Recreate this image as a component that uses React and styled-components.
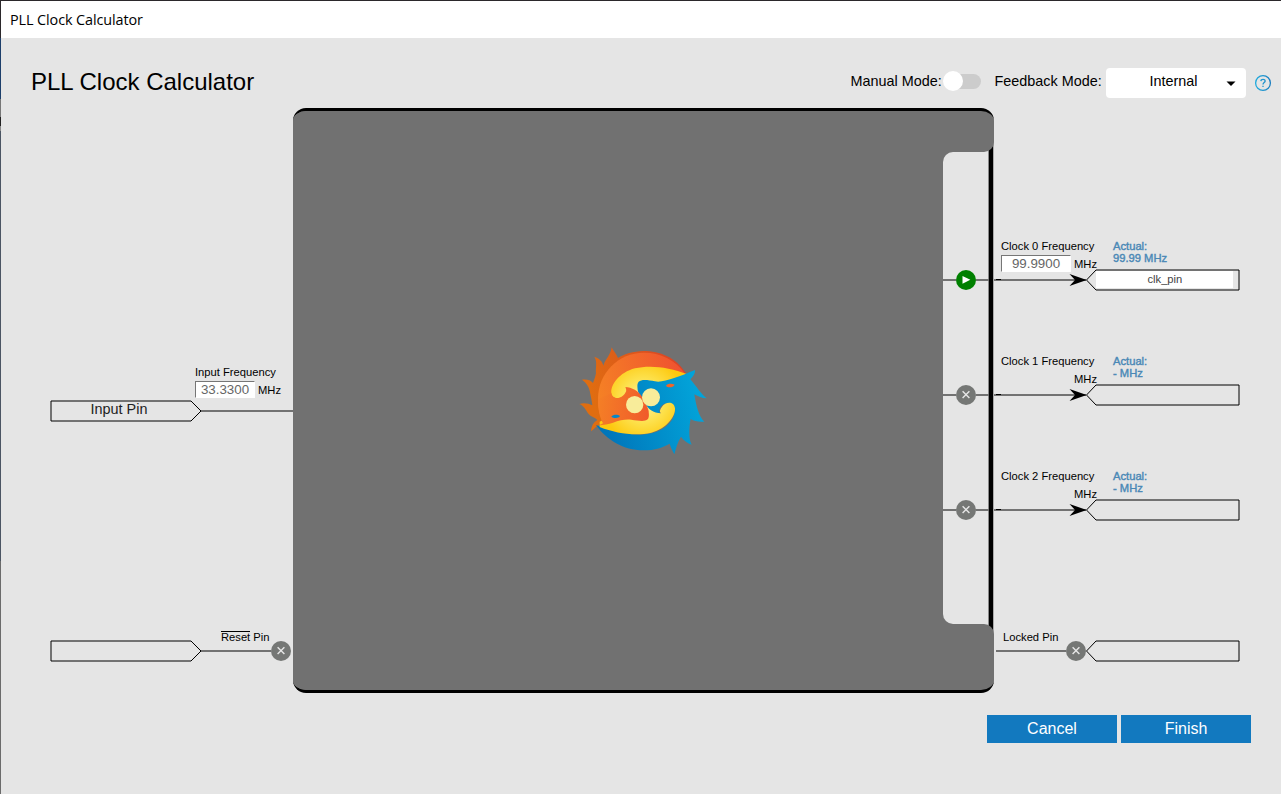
import React from "react";
import styled, { createGlobalStyle } from "styled-components";

const PAPER = "#e5e5e5";
const CHIP = "#717171";
const WIRE = "#727272";

const GlobalStyle = createGlobalStyle`
  * { box-sizing: border-box; }
  body {
    margin: 0;
    background: ${PAPER};
    overflow: hidden;
    font-family: "Liberation Sans", Arial, sans-serif;
    color: #000;
  }
`;

const Window = styled.div`
  display: flex;
  width: 1281px;
  height: 794px;
  border-top: 1px solid #2b282b;
  background: ${PAPER};
`;

const WindowEdge = styled.div`
  width: 1px;
  background: linear-gradient(#2b282b 37px, #1d3f6b 37px 98px, #777 98px 116px, #222 116px 125px, #888 125px 130px, #4b5563 130px 560px, #6b6b6b 560px);
`;

const Content = styled.div`
  flex: 1;
  display: flex;
  flex-direction: column;
`;

const TitleBar = styled.div`
  height: 37px;
  padding: 8px 0 0 9px;
  background: #fff;
  font-family: "Open Sans", "Noto Sans", sans-serif;
  font-size: 14.4px;
  line-height: 21px;
  letter-spacing: -0.09px;
  white-space: nowrap;
`;

const Header = styled.header`
  display: flex;
  height: 70px;
  padding-left: 30px;
`;

const Heading = styled.h1`
  flex: 1;
  margin: 30px 0 0;
  font-size: 24px;
  font-weight: 400;
  line-height: 28px;
`;

const Controls = styled.div`
  display: flex;
  align-items: flex-start;
  padding-right: 9px;
  font-size: 14.4px;
  line-height: 16px;
  white-space: nowrap;
`;

const ControlLabel = styled.label`
  width: ${(p) => p.$width}px;
  padding: 35px 0 0 0.5px;
`;

const Toggle = styled.div`
  display: flex;
  align-items: center;
  width: 38px;
  height: 20px;
  margin: 33px 13px 0 0;
`;

const Knob = styled.div`
  z-index: 1;
  width: 20px;
  height: 20px;
  border-radius: 50%;
  background: #fff;
`;

const Track = styled.div`
  width: 28px;
  height: 15px;
  margin-left: -10px;
  border-radius: 8px;
  background: #ccc;
`;

const Select = styled.div`
  display: flex;
  align-items: center;
  width: 140px;
  height: 30px;
  margin-top: 30px;
  padding-right: 10px;
  border-radius: 4px;
  background: #fff;
`;

const SelectValue = styled.span`
  flex: 1;
  padding: 0 0 5px 15px;
  text-align: center;
`;

const HelpButton = styled.svg`
  display: block;
  margin: 36px 0 0 8px;
`;

const Diagram = styled.main`
  display: flex;
  height: 585px;
`;

const Inputs = styled.section`
  width: 292px;
  padding: 258px 0 0 49px;
`;

const Outputs = styled.section`
  flex: 1;
  padding: 132px 0 0 0;
`;

const Port = styled.div`
  margin-top: ${(p) => p.$gap || 0}px;
`;

const PortInfo = styled.div`
  display: flex;
  height: ${(p) => p.$height}px;
  padding-left: ${(p) => p.$indent}px;
  font-size: 11.2px;
  line-height: 13px;
  white-space: nowrap;
`;

const PortLine = styled.div`
  display: flex;
  align-items: center;
  height: 22px;
  padding-left: ${(p) => p.$indent || 0}px;
`;

const InfoColumn = styled.div`
  width: ${(p) => p.$width}px;
`;

const Overline = styled.span`
  display: inline-block;
  height: 13px;
  border-top: 1px solid #000;
  line-height: 11px;
`;

const Frequency = styled.div`
  display: flex;
  justify-content: ${(p) => (p.$end ? "flex-end" : "flex-start")};
  width: 96px;
  height: 17px;
  margin-top: 2px;
`;

const FrequencyField = styled.div`
  width: ${(p) => p.$width}px;
  height: 17px;
  margin-right: 3px;
  border: 1px solid #fff;
  border-top-color: #767676;
  border-left-color: #767676;
  background: #fff;
  color: #666;
  font-size: 13.33px;
  line-height: 16px;
  text-align: center;
`;

const Unit = styled.span`
  padding-top: 3px;
`;

const Actual = styled.div`
  color: #4a88b6;
  line-height: 12px;
  -webkit-text-stroke: 0.4px #4a88b6;
`;

const Wire = styled.div`
  flex: ${(p) => (p.$length ? "none" : "1")};
  width: ${(p) => (p.$length ? p.$length + "px" : "auto")};
  height: 2px;
  background: ${WIRE};
`;

const Badge = styled.svg`
  display: block;
  flex: none;
`;

const PinBox = styled.div`
  display: grid;
  flex: none;
  width: ${(p) => p.$width}px;
  height: 22px;
  & > * { grid-area: 1 / 1; }
`;

const PinName = styled.span`
  margin-left: 40.6px;
  padding-top: 1px;
  font-size: 14.4px;
  line-height: 16px;
  color: #222;
`;

const PinField = styled.div`
  width: 137px;
  height: 17px;
  margin: 2px 0 0 10.4px;
  background: #fff;
  color: #444;
  font-size: 11.2px;
  line-height: 16px;
  text-align: center;
`;

const Chip = styled.section`
  display: flex;
  flex-direction: column;
  width: 701px;
  border: solid #000;
  border-width: 3px 0;
  border-radius: 13px;
  background: linear-gradient(90deg, ${CHIP} 600px, #000 600px 700px, #aaa 700px);
  overflow: hidden;
`;

const ChipCap = styled.div`
  flex: none;
  z-index: 1;
  height: ${(p) => p.$height}px;
  border-radius: ${(p) => (p.$top ? "0 0 10px 0" : "0 10px 0 0")};
  background: ${CHIP};
`;

const ChipMiddle = styled.div`
  display: flex;
  flex: 1;
  margin: -10px 0;
`;

const ChipFace = styled.div`
  display: flex;
  width: 650px;
  padding: 198px 0 0 277px;
  background: ${CHIP};
`;

const SlotWell = styled.div`
  width: 46px;
  padding: 10px 0;
  background: linear-gradient(90deg, ${CHIP} 30px, ${PAPER} 30px);
  border-right: 1px solid #8a8a8a;
`;

const Slot = styled.div`
  display: flex;
  flex-direction: column;
  gap: 95px;
  height: 472px;
  padding-top: 118px;
  border-radius: 10px 0 0 10px;
  background: ${PAPER};
`;

const SlotRow = styled.div`
  display: flex;
  align-items: center;
  height: 20px;
`;

const Footer = styled.footer`
  display: flex;
  justify-content: flex-end;
  gap: 4px;
  padding: 22px 30px 0 0;
`;

const Button = styled.button`
  width: 130px;
  height: 28px;
  padding: 0 0 1px;
  border: 0;
  background: #1279bf;
  color: #fff;
  font: 16px/27px "Liberation Sans", Arial, sans-serif;
`;

function StatusBadge({ on }) {
  return (
    <Badge width="20" height="20" viewBox="0 0 20 20">
      <circle cx="10" cy="10" r="10" fill={on ? "#008000" : "#757775"} />
      {on ? (
        <path d="M6.5 5.9L14.3 9.7L6.5 13.8Z" fill="#fff" />
      ) : (
        <path d="M6.6 6.2L13.4 13M13.4 6.2L6.6 13" stroke="#e6e6e6" strokeWidth="1.4" />
      )}
    </Badge>
  );
}

function PinOutline({ left }) {
  return (
    <svg width={left ? 152 : 154} height="22" fill="none" stroke="#000">
      <path d={left ? "M1 1H141L151 11L141 21H1Z" : "M153 1H10L0.5 11L10 21H153Z"} />
    </svg>
  );
}

function ArrowWire() {
  return (
    <svg width="92" height="22">
      <path d="M0 11H92" stroke="#000" />
      <path d="M2 10.5H7" stroke="#000" />
      <path d="M75.5 5L93 11L75.5 17L81 11Z" />
    </svg>
  );
}

function ClockPort({ index, value, actual, pin, gap }) {
  return (
    <Port $gap={gap}>
      <PortInfo $height={29} $indent={7}>
        <InfoColumn $width={112}>
          Clock {index} Frequency
          <Frequency $end={!value}>
            {value && <FrequencyField $width={70}>{value}</FrequencyField>}
            <Unit>MHz</Unit>
          </Frequency>
        </InfoColumn>
        <Actual>
          Actual:
          <br />
          {actual} MHz
        </Actual>
      </PortInfo>
      <PortLine>
        <ArrowWire />
        <PinBox $width={154}>
          <PinOutline />
          {pin && <PinField>{pin}</PinField>}
        </PinBox>
      </PortLine>
    </Port>
  );
}

const BLUE_BODY =
  "M375 90C355 97 335 108 310 115C290 122 270 127 255 124C235 120 215 117 206 125C200 132 203 142 203 150C206 165 215 172 222 190C232 210 255 220 271 223C268 215 266 205 275 197C290 183 315 190 315 212C313 240 290 268 245 280C195 292 135 275 78 255C110 300 160 331 220 331C255 331 280 322 299 311C303 325 308 333 313 343C318 325 322 308 333 290C340 300 350 308 365 314C355 296 357 260 362 237C372 244 385 246 403 245C386 230 378 195 373 163C385 170 395 175 410 175C393 162 380 140 361 118C370 108 376 100 375 90Z";
const YELLOW_SWIRL =
  "M350 102C300 82 240 74 195 85C148 97 122 135 124 158C127 180 152 178 163 163C168 155 172 150 166 143C188 145 207 155 215 178L225 181L350 118Z";

function Logo() {
  return (
    <svg width="145" height="125" viewBox="0 0 435 375">
      <defs>
        <linearGradient id="fire" gradientUnits="userSpaceOnUse" x1="84" y1="150" x2="340" y2="80">
          <stop offset="0" stopColor="#f58025" />
          <stop offset="1" stopColor="#ef5130" />
        </linearGradient>
        <linearGradient id="head" gradientUnits="userSpaceOnUse" x1="90" y1="200" x2="240" y2="215">
          <stop offset="0" stopColor="#f47d26" />
          <stop offset="1" stopColor="#f0592b" />
        </linearGradient>
        <linearGradient id="rim" gradientUnits="userSpaceOnUse" x1="60" y1="150" x2="340" y2="80">
          <stop offset="0" stopColor="#e06d10" />
          <stop offset="1" stopColor="#d94327" />
        </linearGradient>
        <linearGradient id="water" gradientUnits="userSpaceOnUse" x1="110" y1="270" x2="390" y2="200">
          <stop offset="0" stopColor="#0076ba" />
          <stop offset="1" stopColor="#02a3d9" />
        </linearGradient>
        <radialGradient id="glow" gradientUnits="userSpaceOnUse" cx="219" cy="181" r="125">
          <stop offset="0" stopColor="#fbf3a8" />
          <stop offset="0.55" stopColor="#fde04a" />
          <stop offset="1" stopColor="#fdc90f" />
        </radialGradient>
      </defs>
      <path
        fill="url(#rim)"
        d="M348 100C318 52 270 33 220 33C190 34 163 42 144 54C140 42 130 34 125 22C122 45 106 58 100 77C98 65 88 55 73 50C83 65 76 84 78 100C76 112 72 120 69 129C62 120 50 117 36 119C52 130 59 145 61 162C63 172 66 185 67 196C55 190 42 187 28 192C44 198 48 212 56 222C62 230 75 232 82 240C70 247 64 258 63 274C70 270 76 262 84 256L200 180Z"
      />
      <path fill="url(#fire)" d="M345 101C315 59 271 38 222 38C145 38 84 99 84 176C84 206 90 231 102 250L220 190Z" />
      <path fill="url(#glow)" d={YELLOW_SWIRL} />
      <path fill="url(#water)" d={BLUE_BODY} />
      <path fill="url(#glow)" d={YELLOW_SWIRL} transform="rotate(180 219.5 181.5)" />
      <path
        fill="url(#head)"
        d="M84 257C102 254 115 252 129 248C149 240 169 237 184 239C204 242 224 246 233 238C239 231 236 220 236 213C233 198 224 191 217 172C207 152 184 142 166 141C171 149 172 156 164 165C151 180 125 176 124 160L84 178C84 206 88 230 99 250Z"
      />
      <circle cx="194" cy="194" r="26" fill="#f8ec9a" />
      <circle cx="243" cy="172" r="27" fill="#f8ec9a" />
      <path d="M288 137C293 130 306 130 314 134C309 143 293 145 288 137Z" fill="#f26529" />
      <path d="M124 230C130 223 143 223 150 228C146 236 130 235 124 230Z" fill="#0787c8" />
    </svg>
  );
}

export default function App() {
  return (
    <Window>
      <GlobalStyle />
      <WindowEdge />
      <Content>
        <TitleBar>PLL Clock Calculator</TitleBar>
        <Header>
          <Heading>PLL Clock Calculator</Heading>
          <Controls>
            <ControlLabel $width={93}>Manual Mode:</ControlLabel>
            <Toggle>
              <Knob />
              <Track />
            </Toggle>
            <ControlLabel $width={112}>Feedback Mode:</ControlLabel>
            <Select>
              <SelectValue>Internal</SelectValue>
              <svg width="10" height="6">
                <path d="M0.5 1.5H9.5L5 6Z" />
              </svg>
            </Select>
            <HelpButton width="18" height="18" viewBox="0 0 18 18" fill="none" stroke="url(#help)" strokeWidth="1.3">
              <defs>
                <linearGradient id="help" gradientUnits="userSpaceOnUse" x1="2" y1="9" x2="16" y2="9">
                  <stop offset="0" stopColor="#22abdd" />
                  <stop offset="1" stopColor="#1c7fc0" />
                </linearGradient>
              </defs>
              <circle cx="9" cy="9" r="7.4" />
              <path d="M6.9 7.1C7 4.7 11.2 4.7 11.1 7.1C11 8.6 9 8.6 9 10.4M9 11.7V13.1" />
            </HelpButton>
          </Controls>
        </Header>
        <Diagram>
          <Inputs>
            <Port>
              <PortInfo $height={34} $indent={145}>
                <InfoColumn $width={96}>
                  Input Frequency
                  <Frequency>
                    <FrequencyField $width={60}>33.3300</FrequencyField>
                    <Unit>MHz</Unit>
                  </Frequency>
                </InfoColumn>
              </PortInfo>
              <PortLine>
                <PinBox $width={151}>
                  <PinOutline left />
                  <PinName>Input Pin</PinName>
                </PinBox>
                <Wire />
              </PortLine>
            </Port>
            <Port $gap={209}>
              <PortInfo $height={9} $indent={171}>
                <span>
                  <Overline>Reset</Overline> Pin
                </span>
              </PortInfo>
              <PortLine>
                <PinBox $width={151}>
                  <PinOutline left />
                </PinBox>
                <Wire $length={70} />
                <StatusBadge />
              </PortLine>
            </Port>
          </Inputs>
          <Chip>
            <ChipCap $top $height={41} />
            <ChipMiddle>
              <ChipFace>
                <Logo />
              </ChipFace>
              <SlotWell>
                <Slot>
                  {[true, false, false].map((on, i) => (
                    <SlotRow key={i}>
                      <Wire $length={13} />
                      <StatusBadge on={on} />
                      <Wire $length={13} />
                    </SlotRow>
                  ))}
                </Slot>
              </SlotWell>
            </ChipMiddle>
            <ChipCap $height={66} />
          </Chip>
          <Outputs>
            <ClockPort index={0} value="99.9900" actual="99.99" pin="clk_pin" />
            <ClockPort index={1} actual="-" gap={64} />
            <ClockPort index={2} actual="-" gap={64} />
            <Port $gap={110}>
              <PortInfo $height={9} $indent={9}>
                Locked Pin
              </PortInfo>
              <PortLine $indent={2}>
                <Wire $length={70} />
                <StatusBadge />
                <PinBox $width={154}>
                  <PinOutline />
                </PinBox>
              </PortLine>
            </Port>
          </Outputs>
        </Diagram>
        <Footer>
          <Button>Cancel</Button>
          <Button>Finish</Button>
        </Footer>
      </Content>
    </Window>
  );
}
